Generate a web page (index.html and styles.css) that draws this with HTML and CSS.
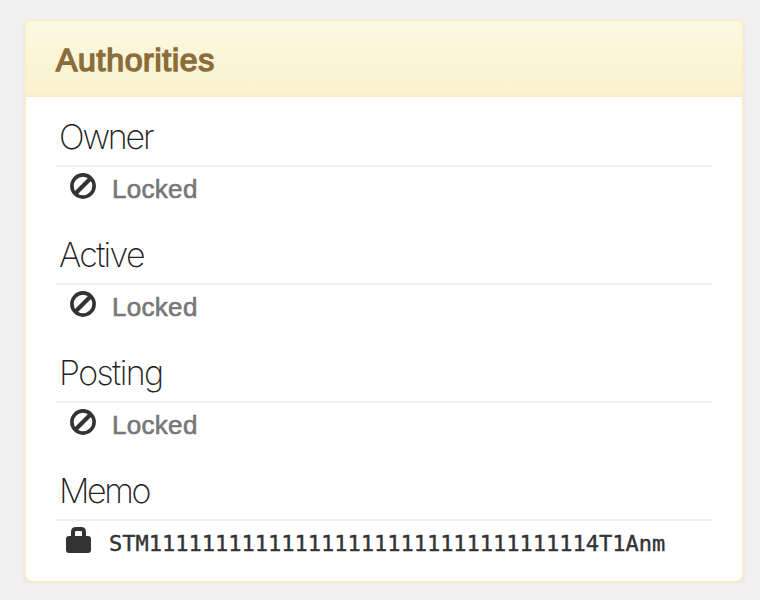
FILE: index.html
```html
<!DOCTYPE html>
<html lang="en">
<head>
    <meta charset="utf-8">
    <title>Authorities</title>
    <link rel="stylesheet" href="styles.css">
</head>
<body>
    <div class="panel">
        <div class="panel-heading">
            <h3 class="panel-title">Authorities</h3>
        </div>
        <div class="panel-body">
            <div class="authority">
                <h4 class="owner">Owner</h4>
                <div class="key">
                    <svg class="icon-ban" viewBox="0 0 26 26"><circle cx="13" cy="13" r="11.1"/><path d="M5.5 20.5L20.5 5.5"/></svg>
                    <span class="locked">Locked</span>
                </div>
            </div>
            <div class="authority">
                <h4 class="active">Active</h4>
                <div class="key">
                    <svg class="icon-ban" viewBox="0 0 26 26"><circle cx="13" cy="13" r="11.1"/><path d="M5.5 20.5L20.5 5.5"/></svg>
                    <span class="locked">Locked</span>
                </div>
            </div>
            <div class="authority">
                <h4 class="posting">Posting</h4>
                <div class="key">
                    <svg class="icon-ban" viewBox="0 0 26 26"><circle cx="13" cy="13" r="11.1"/><path d="M5.5 20.5L20.5 5.5"/></svg>
                    <span class="locked">Locked</span>
                </div>
            </div>
            <div class="authority">
                <h4 class="memo">Memo</h4>
                <div class="key key-memo">
                    <svg class="icon-lock" viewBox="0 0 25 26"><path fill-rule="evenodd" d="M5 9V5Q5 0 10 0H15Q20 0 20 5V9H22Q25 9 25 12V23Q25 26 22 26H3Q0 26 0 23V12Q0 9 3 9ZM9 9H16V5Q16 4 15 4H10Q9 4 9 5Z"/></svg>
                    <code>STM1111111111111111111111111111111114T1Anm</code>
                </div>
            </div>
        </div>
    </div>
</body>
</html>
```

FILE: styles.css
```css
* {
    box-sizing: border-box;
}
body {
    margin: 0;
    padding: 19px 16px 0 24px;
    background-color: #f0f0f0;
    color: #333;
    font-family: "Liberation Sans", Arial, sans-serif;
}
.panel {
    height: 564px;
    background-color: #fff;
    border: 2px solid #faebcc;
    border-radius: 8px;
    box-shadow: 0 2px 4px rgba(0, 0, 0, 0.05);
    overflow: hidden;
}
.panel-heading {
    height: 76px;
    padding: 20px 30px 0;
    background-image: linear-gradient(#fcf8e3, #faf2cc);
    border-bottom: 2px solid #faebcc;
}
.panel-title {
    margin: 0;
    color: #8a6d3b;
    font-size: 32px;
    font-weight: normal;
    line-height: 38px;
    letter-spacing: 0.7px;
    -webkit-text-stroke: 1.5px #8a6d3b;
}
.panel-body {
    padding: 12px 30px 0;
}
.authority {
    height: 118px;
}
h4 {
    height: 58px;
    margin: 0;
    padding-left: 3px;
    border-bottom: 2px solid #eee;
    color: #222;
    font-family: Inter, "Liberation Sans", sans-serif;
    font-size: 34px;
    font-weight: 200;
    line-height: 56px;
    letter-spacing: -1.7px;
}
.owner {
    letter-spacing: -2.2px;
}
.posting {
    letter-spacing: -1.6px;
}
.memo {
    letter-spacing: -2.4px;
}
.key {
    display: flex;
    align-items: flex-start;
    gap: 16px;
    padding: 6px 0 0 14px;
}
.icon-ban {
    width: 26px;
    height: 26px;
    fill: none;
    stroke: #333;
    stroke-width: 3.6;
}
.icon-ban path {
    stroke-width: 4.2;
}
.locked {
    color: #777;
    font-size: 26px;
    line-height: 32px;
    letter-spacing: 0.3px;
    -webkit-text-stroke: 0.6px #777;
}
.key-memo {
    gap: 18px;
    padding-left: 10px;
}
.icon-lock {
    width: 25px;
    height: 26px;
    fill: #333;
}
code {
    font-family: "DejaVu Sans Mono", monospace;
    font-size: 22px;
    line-height: 33px;
    -webkit-text-stroke: 0.4px #333;
}
```
